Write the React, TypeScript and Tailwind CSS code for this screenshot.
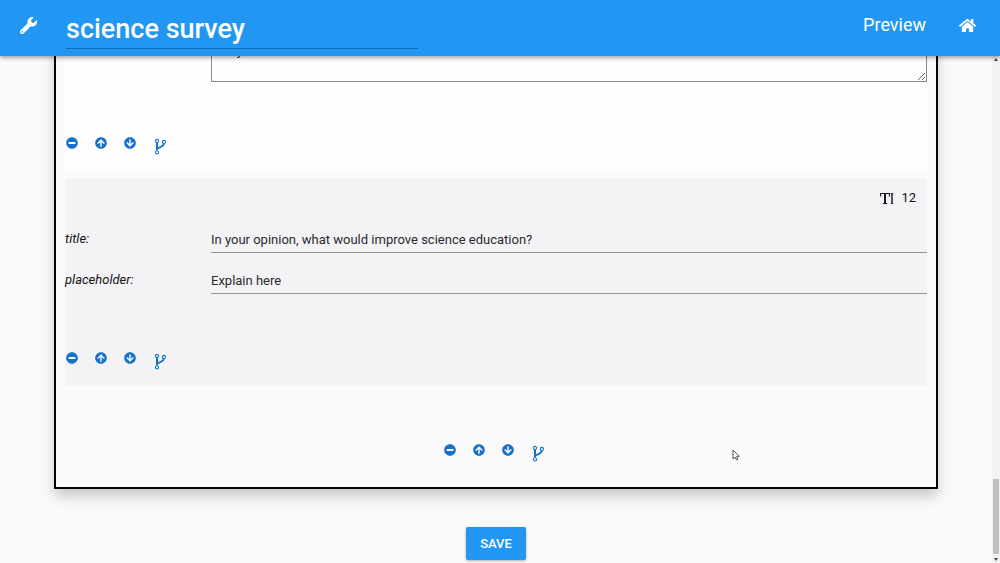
import type { ReactNode } from "react";
import { FaArrowCircleDown, FaArrowCircleUp, FaHome, FaMinusCircle, FaWrench } from "react-icons/fa";

function BranchIcon() {
  return (
    <svg width="13" height="17" viewBox="0 0 13 17" fill="none" stroke="currentColor" aria-hidden="true">
      <path d="M3 4.8v7.5" strokeWidth="2" />
      <path d="M9.9 5.2c0 3.6-4 3.4-6.7 5.6" strokeWidth="1.8" />
      <circle cx="3" cy="3" r="1.6" strokeWidth="1.1" />
      <circle cx="9.9" cy="4" r="1.6" strokeWidth="1.1" />
      <circle cx="3" cy="14.4" r="1.6" strokeWidth="1.1" />
    </svg>
  );
}

function IconButton({ label, children }: { label: string; children: ReactNode }) {
  return (
    <button type="button" aria-label={label} className="flex w-3 justify-center text-xs">
      {children}
    </button>
  );
}

function ItemActions() {
  return (
    <div className="flex h-5 items-start gap-[17px] text-[#1672c8]">
      <IconButton label="Remove"><FaMinusCircle /></IconButton>
      <IconButton label="Move up"><FaArrowCircleUp /></IconButton>
      <IconButton label="Move down"><FaArrowCircleDown /></IconButton>
      <button type="button" aria-label="Add branch" className="ml-px pt-px">
        <BranchIcon />
      </button>
    </div>
  );
}

function Field({ id, label, value }: { id: string; label: string; value: string }) {
  return (
    <div className="flex h-[41px] items-end">
      <label htmlFor={id} className="flex h-7 w-[146px] shrink-0 items-center italic text-[#161616]">
        {label}
      </label>
      <input
        id={id}
        defaultValue={value}
        className="h-7 min-w-0 flex-1 border-b border-[#96959a] bg-transparent pt-px text-[#2b2b2d] outline-none"
      />
    </div>
  );
}

function TextSizeIcon() {
  return (
    <svg width="14" height="13" viewBox="0 0 14 13" fill="none" stroke="#1b1d24" aria-hidden="true">
      <path d="M0.6 4.4V1.5h8.8v2.9" strokeWidth="1.1" />
      <path d="M5 1.5v10" strokeWidth="2" />
      <path d="M2.8 11.5h4.4" strokeWidth="1.1" />
      <path d="M12 1.5v10" strokeWidth="1.5" />
      <path d="M10.6 1.5h2.8M10.6 11.5h2.8" strokeWidth="0.8" />
    </svg>
  );
}

export default function App() {
  return (
    <div className="flex h-screen flex-col overflow-hidden bg-[#faf9fc] font-[Roboto,sans-serif] text-[13px]">
      <header className="relative z-10 flex h-14 shrink-0 items-center bg-[#2196f3] pl-5 pr-6 text-white shadow-[0_2px_4px_rgba(0,0,0,0.35)]">
        <button type="button" aria-label="Settings" className="mb-1.5 w-[46px] text-[17px]">
          <FaWrench />
        </button>
        <input
          aria-label="Survey title"
          defaultValue="science survey"
          className="h-[42px] w-[352px] border-b border-[#1565b0] bg-transparent pt-0.5 text-[27px] font-medium outline-none"
        />
        <nav className="mb-1.5 ml-auto flex items-center gap-[33px]">
          <a href="#preview" className="text-lg">Preview</a>
          <a href="#home" aria-label="Home" className="text-[17px]"><FaHome /></a>
        </nav>
      </header>

      <div className="flex min-h-0 flex-1">
        <main className="flex min-w-0 flex-1 flex-col overflow-hidden px-[54px]">
          <div className="-mt-5 border-2 border-[#050507] bg-[#faf9fc] px-[9px] pb-[23px] shadow-[0_8px_12px_rgba(0,0,0,0.18)]">
            <section className="bg-[#fefdff] pb-[14px]">
              <div className="flex pl-[146px]">
                <textarea
                  aria-label="Answer"
                  defaultValue="They"
                  className="h-11 flex-1 border border-[#8b8a8e] bg-transparent px-[3px] pt-1 leading-4 text-[#222] outline-none"
                />
              </div>
              <div className="mt-[55px] pl-px">
                <ItemActions />
              </div>
            </section>

            <section className="mt-2 bg-[#f3f2f5] pb-[14px]">
              <div className="flex h-[33px] items-center justify-end gap-[7px] pr-[11px] pt-[5px]">
                <TextSizeIcon />
                <span className="leading-4 text-[#111]">12</span>
              </div>
              <Field id="title" label="title:" value="In your opinion, what would improve science education?" />
              <Field id="placeholder" label="placeholder:" value="Explain here" />
              <div className="mt-[58px] pl-px">
                <ItemActions />
              </div>
            </section>

            <div className="mt-[58px] flex justify-center pr-1">
              <ItemActions />
            </div>
          </div>

          <div className="mt-[38px] flex shrink-0 justify-center">
            <button
              type="button"
              className="h-[33px] w-[60px] rounded-xs bg-[#2196f3] font-medium text-white shadow-[0_1px_3px_rgba(0,0,0,0.3)]"
            >
              SAVE
            </button>
          </div>
        </main>

        <div className="flex w-2 shrink-0 flex-col items-center justify-between bg-[#f2f1f3] pb-0.5 pt-0.5" aria-hidden="true">
          <svg width="4" height="3" viewBox="0 0 4 3" fill="#444"><path d="M2 0l2 3H0z" /></svg>
          <div className="mb-1 mt-auto h-[75px] w-1.5 bg-[#bfbec1]" />
          <svg width="4" height="3" viewBox="0 0 4 3" fill="#444"><path d="M0 0h4L2 3z" /></svg>
        </div>
      </div>

      <svg className="absolute left-[732px] top-[449px]" width="8" height="12" viewBox="0 0 8 12" fill="#fff" stroke="#55555a" aria-hidden="true">
        <path d="M1 1v9l2-2 1.5 3 1.4-.7L4.6 7.4H7.3z" strokeWidth="1" />
      </svg>
    </div>
  );
}
